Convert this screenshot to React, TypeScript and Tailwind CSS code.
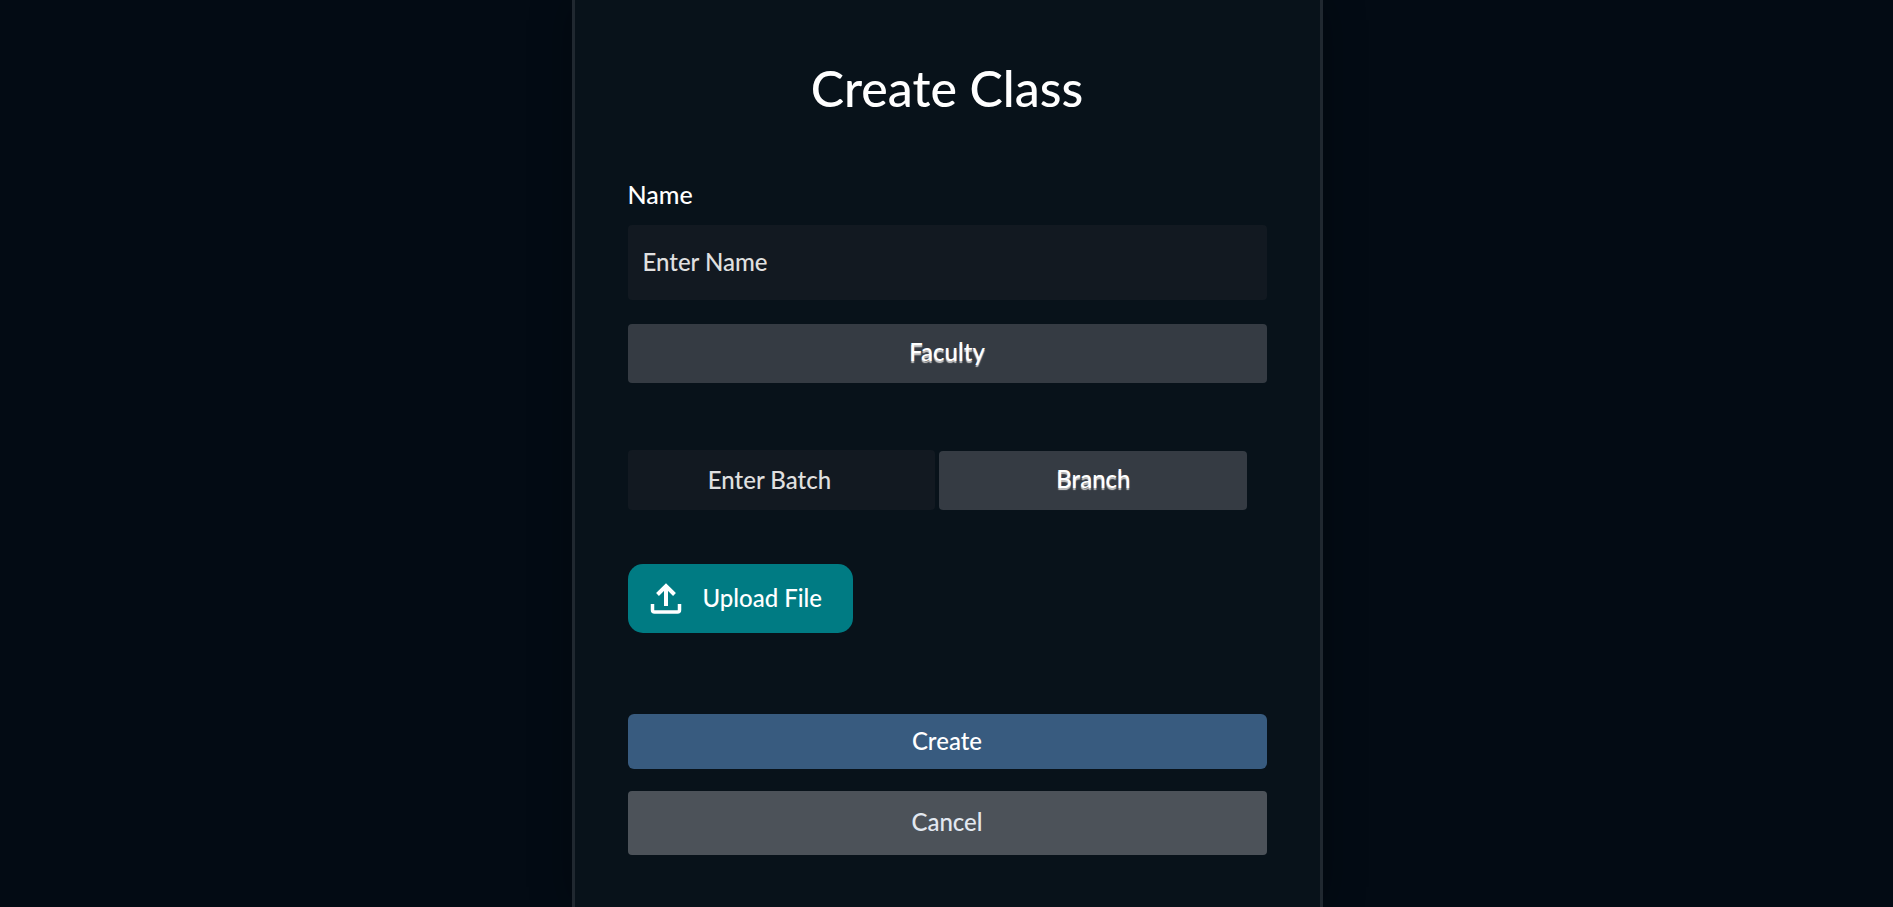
export default function App() {
  return (
    <main className="flex min-h-screen justify-center bg-[#030b14] pl-px font-['Lato',sans-serif] text-2xl font-medium text-white">
      <form className="w-full max-w-[751px] border-x-[3px] border-[#202830] bg-[#08121a] px-[53px] pt-[58px] pb-12 shadow-[0_0_40px_rgba(0,0,0,0.3)]">
        <h1 className="text-center text-[50px] leading-[60px]">Create Class</h1>
        <label htmlFor="name" className="mt-[60px] block text-[25px] leading-[32px]">Name</label>
        <input id="name" placeholder="Enter Name" className="mt-[15px] block h-[75px] w-full rounded bg-[#121921] px-[15px] pb-[2px] placeholder:text-[#e0e0e0]" />
        <button type="button" className="mt-6 block h-[59px] w-full rounded bg-[#353b43] pb-[3px] text-shadow-[0_2px_1px_#c8c8c8]">Faculty</button>
        <div className="mt-[67px] grid w-[97%] grid-cols-2 gap-1">
          <input aria-label="Batch" placeholder="Enter Batch" className="h-[60px] w-full rounded bg-[#121921] pr-6 pb-[2px] text-center placeholder:text-[#e0e0e0]" />
          <button type="button" className="mt-px h-[59px] rounded bg-[#353b43] pb-[3px] text-shadow-[0_2px_1px_#c8c8c8]">Branch</button>
        </div>
        <button type="button" className="mt-[54px] flex h-[69px] items-center gap-[21px] rounded-[15px] bg-[#007b83] pr-[31px] pb-[2px] pl-[22px]">
          <svg viewBox="0 0 32 32" className="size-8" fill="none" stroke="currentColor" aria-hidden="true">
            <path strokeWidth="4" d="M16 24V5M7.500 12.500L16 4l8.500 8.500" />
            <path strokeWidth="3.500" d="M2.500 22v6q0 2 2 2h23q2 0 2-2v-6" />
          </svg>
          Upload File
        </button>
        <button type="submit" className="mt-[81px] block h-[55px] w-full rounded-md bg-[#385b7f] pb-[2px]">Create</button>
        <button type="button" className="mt-[22px] block h-16 w-full rounded bg-[#4c5259] pb-[2px] text-[#e2e8f0]">Cancel</button>
      </form>
    </main>
  );
}
